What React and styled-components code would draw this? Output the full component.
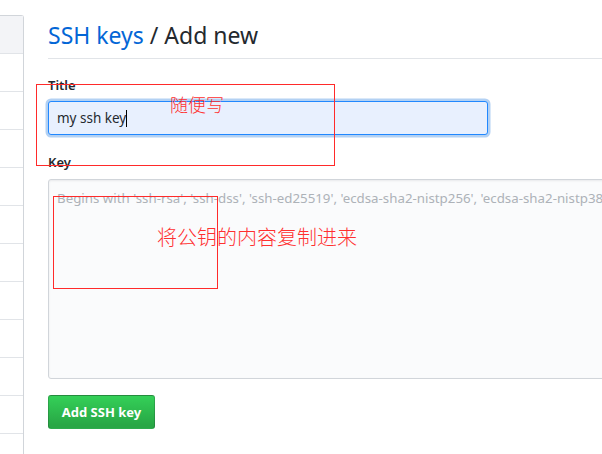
import React from "react";
import styled, { createGlobalStyle } from "styled-components";

const Global = createGlobalStyle`
  html, body { margin: 0; padding: 0; background: #fff; }
  body { font-family: "Noto Sans", "Liberation Sans", sans-serif; color: #24292e; overflow: hidden; }
  * { box-sizing: border-box; }
`;

const Page = styled.div`
  position: relative;
  display: flex;
  width: 602px;
  height: 454px;
  overflow: hidden;
`;

const Sidebar = styled.nav`
  flex: 0 0 auto;
  width: 34px;
  margin-left: -10px;
  margin-top: 15px;
  border: 1px solid #d1d5da;
  border-radius: 0 3px 0 0;
  border-bottom: none;
  display: flex;
  flex-direction: column;
`;

const SideItem = styled.div`
  flex: 0 0 auto;
  background: ${(p) => (p.$active ? "#f3f4f7" : "#fff")};
  border-top: ${(p) => (p.$first ? "none" : "1px solid #e1e4e8")};
  height: ${(p) => (p.$first ? "37px" : "38px")};
`;

const Main = styled.main`
  flex: 1;
  margin-left: 24px;
  min-width: 0;
`;

const Header = styled.div`
  margin-top: 20px;
  padding-bottom: 8px;
  border-bottom: 1px solid #e1e4e8;
`;

const Heading = styled.h2`
  margin: 0;
  font-size: 23px;
  line-height: 30px;
  font-weight: 400;
  color: #24292e;
  white-space: nowrap;
`;

const Crumb = styled.span`
  color: #0366d6;
`;

const Field = styled.div`
  margin-top: ${(p) => p.$mt || "16px"};
`;

const Label = styled.label`
  display: block;
  font-size: 13px;
  line-height: 21px;
  font-weight: 600;
  margin-bottom: ${(p) => p.$mb || "5px"};
`;

const Input = styled.div`
  width: 440px;
  height: 34px;
  padding: 0 8px;
  display: flex;
  align-items: center;
  font-size: 13.5px;
  background: #e8f0fe;
  border: 1px solid #2188ff;
  border-radius: 3px;
  box-shadow: 0 0 0 2.5px rgba(3, 102, 214, 0.3);
  color: #24292e;
`;

const Caret = styled.span`
  display: inline-block;
  width: 1px;
  height: 17px;
  background: #000;
`;

const TextArea = styled.div`
  width: 700px;
  height: 200px;
  padding: 8px;
  background: #fafbfc;
  border: 1px solid #d1d5da;
  border-radius: 3px;
  box-shadow: inset 0 1px 2px rgba(27, 31, 35, 0.075);
  font-size: 13.3px;
  line-height: 20px;
  color: #adb2b8;
  white-space: nowrap;
  overflow: hidden;
`;

const Button = styled.button`
  margin-top: 16px;
  display: inline-flex;
  align-items: center;
  justify-content: center;
  width: 107px;
  height: 34px;
  padding: 0 12px;
  font-family: inherit;
  font-size: 13px;
  font-weight: 700;
  color: #fff;
  background: linear-gradient(-180deg, #34d058 0%, #28a745 90%);
  border: 1px solid rgba(27, 31, 35, 0.2);
  border-radius: 3px;
  cursor: pointer;
`;

const Box = styled.div`
  position: absolute;
  border: 1px solid #ff2a2a;
  pointer-events: none;
`;

const Note = styled.div`
  position: absolute;
  color: #ff3030;
  font-family: "Noto Sans CJK SC", sans-serif;
  font-weight: 300;
  white-space: nowrap;
  pointer-events: none;
`;

export default function App() {
  const rows = Array.from({ length: 12 });
  return (
    <>
      <Global />
      <Page>
        <Sidebar>
          {rows.map((_, i) => (
            <SideItem key={i} $first={i === 0} $active={i === 0} />
          ))}
        </Sidebar>
        <Main>
          <Header>
            <Heading>
              <Crumb>SSH keys</Crumb> / Add new
            </Heading>
          </Header>
          <Field $mt="16px">
            <Label>Title</Label>
            <Input>
              my ssh key<Caret />
            </Input>
          </Field>
          <Field $mt="17px">
            <Label $mb="6px">Key</Label>
            <TextArea>
              Begins with 'ssh-rsa', 'ssh-dss', 'ssh-ed25519', 'ecdsa-sha2-nistp256', 'ecdsa-sha2-nistp384', or 'ecdsa-sha2-nistp521'
            </TextArea>
          </Field>
          <Button>Add SSH key</Button>
        </Main>
        <Box style={{ left: 36, top: 84, width: 299, height: 82 }} />
        <Box style={{ left: 53, top: 196, width: 165, height: 93 }} />
        <Note style={{ left: 170, top: 91, fontSize: 18 }}>随便写</Note>
        <Note style={{ left: 157, top: 222, fontSize: 20 }}>将公钥的内容复制进来</Note>
      </Page>
    </>
  );
}
